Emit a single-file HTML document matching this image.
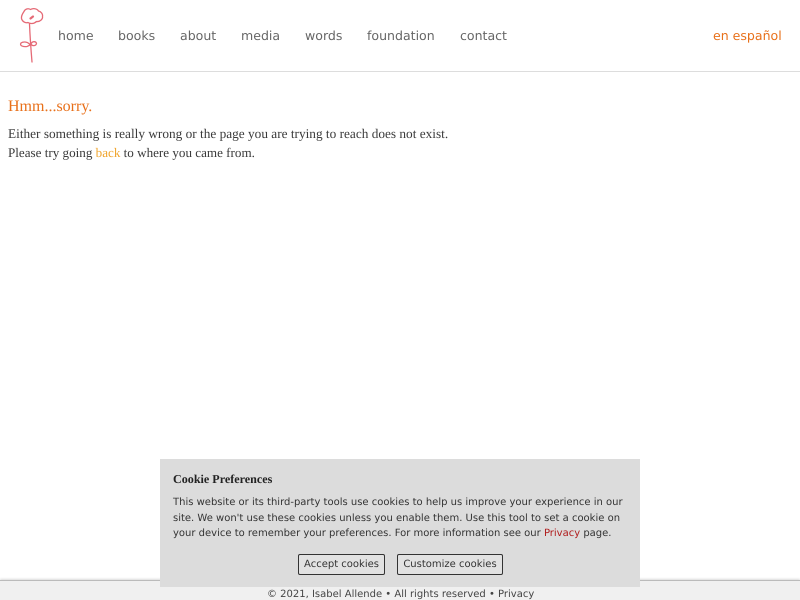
<!DOCTYPE html>
<html lang="en">
<head>
<meta charset="utf-8">
<title>Isabel Allende</title>
<style>
html,body{margin:0;padding:0;background:#fff;width:800px;height:600px;overflow:hidden}
body{position:relative;font-family:"DejaVu Sans",sans-serif;text-rendering:geometricPrecision}
.a{position:absolute;white-space:nowrap;text-decoration:none}
.nav{top:27px;font-size:12.55px;line-height:17px;color:#666}
.s{font-family:"Liberation Serif",serif;color:#3a3a3a}
.c{font-size:10px;line-height:16px;color:#333}
.b{top:554px;height:21px;line-height:19px;box-sizing:border-box;border:1px solid #333;border-radius:2px;background:#e2e2e2;font-size:10px;color:#333;text-align:center}
</style>
</head>
<body>
<div class="a" style="left:0;top:71px;width:800px;height:1px;background:#ddd"></div>
<svg class="a" style="left:0;top:0" width="50" height="70" viewBox="0 0 50 70" fill="none" stroke="#e56a76" stroke-width="1.3" stroke-linecap="round" stroke-linejoin="round">
<path d="M24 11.500C25 9 28 8 30.500 9.500C33 8 37 8.500 38.500 11C41 11.500 43 14 42.500 16.500C43 19 40 22 36.500 21.500C34 24 30 24 28 22.500C25 23.500 22 21 21.500 18.500C21 15.500 23 13 24 11.500Z"/>
<path d="M30.500 18.500L33 16.500" stroke-width="2.200"/>
<path d="M29.500 24C30 36 31 50 32 62"/>
<path d="M29.500 44C27 41.500 23 41.500 21 43C19 46 24 47 27 46.500C29 46 30 45 31 44C32 46.500 36 46 36.500 43.500C36 41 32 41 31 44"/>
</svg>
<a class="a nav" style="left:58px">home</a>
<a class="a nav" style="left:118px">books</a>
<a class="a nav" style="left:180px">about</a>
<a class="a nav" style="left:241px">media</a>
<a class="a nav" style="left:305px">words</a>
<a class="a nav" style="left:367px">foundation</a>
<a class="a nav" style="left:460px">contact</a>
<a class="a nav" style="left:713px;color:#e8701a">en español</a>
<div class="a s" style="left:8px;top:97px;font-size:16px;line-height:20px;color:#e8701a">Hmm...sorry.</div>
<div class="a s" style="left:8px;top:124px;font-size:13.3px;line-height:19px">Either something is really wrong or the page you are trying to reach does not exist.</div>
<div class="a s" style="left:8px;top:143px;font-size:13.1px;line-height:19px">Please try going <a style="color:#f0a52e">back</a> to where you came from.</div>
<div class="a" style="left:0;top:580px;width:800px;height:20px;background:#f0f0f0;border-top:1px solid #bbb;box-sizing:border-box;box-shadow:0 -1px 2px rgba(0,0,0,.15)"></div>
<div class="a c" style="left:267px;top:587px;color:#444">© 2021, Isabel Allende • All rights reserved • Privacy</div>
<div class="a" style="left:160px;top:459px;width:480px;height:128px;background:#dcdcdc"></div>
<div class="a s" style="left:173px;top:471px;font-size:12.1px;line-height:17px;font-weight:bold;color:#222">Cookie Preferences</div>
<div class="a c" style="left:173px;top:495px">This website or its third-party tools use cookies to help us improve your experience in our</div>
<div class="a c" style="left:173px;top:511px">site. We won't use these cookies unless you enable them. Use this tool to set a cookie on</div>
<div class="a c" style="left:173px;top:526px">your device to remember your preferences. For more information see our <a style="color:#b01c1c">Privacy</a> page.</div>
<div class="a b" style="left:298px;width:87px">Accept cookies</div>
<div class="a b" style="left:397px;width:106px">Customize cookies</div>
</body>
</html>
